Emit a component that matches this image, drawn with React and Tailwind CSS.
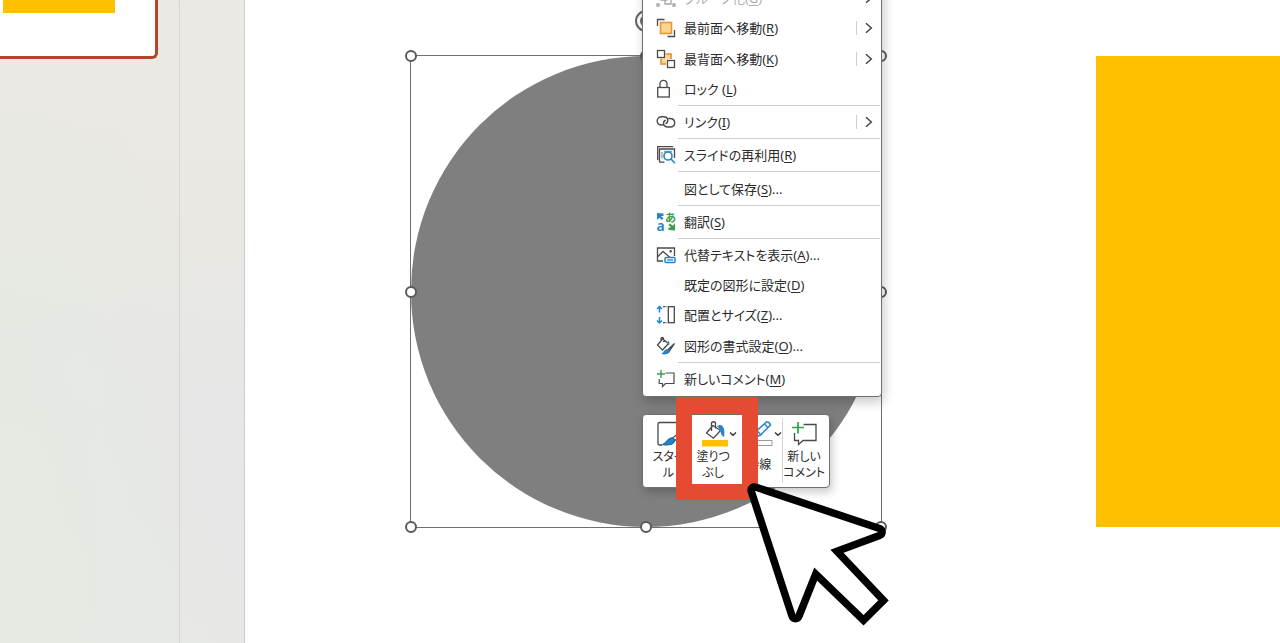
import React from "react";

const INK = "#4a4a4a";
const BLUE = "#2584c8";

function Icon({ children, size = "w-5 h-5" }) {
  return (
    <svg
      viewBox="0 0 20 20"
      className={`${size} shrink-0`}
      fill="none"
      stroke={INK}
      strokeWidth="1.3"
      aria-hidden="true"
    >
      {children}
    </svg>
  );
}

const GroupIcon = () => (
  <Icon>
    <g stroke="#a8a8a8">
      <path d="M5 6h6v6h-6zM9 9h6v7h-6z" />
      <path d="M1 1h2v2h-2zM17 1h2v2h-2zM1 16h2v2h-2zM17 16h2v2h-2z" />
    </g>
  </Icon>
);
const FrontIcon = () => (
  <Icon>
    <path d="M1.500 8V1.500h7M18.500 12v6.500h-7" />
    <rect x="4.500" y="4.500" width="11" height="11" fill="#fbd58b" stroke="#e8963a" strokeWidth="1.600" />
  </Icon>
);
const BackIcon = () => (
  <Icon>
    <rect x="5" y="5" width="10" height="10" fill="#fbd58b" stroke="#e8963a" strokeWidth="1.700" />
    <rect x="0" y="0" width="9.600" height="9.600" fill="#fff" stroke="none" />
    <rect x="10.200" y="10.200" width="9.600" height="9.600" fill="#fff" stroke="none" />
    <rect x="1.500" y="1.500" width="7" height="7" />
    <rect x="11.500" y="11.500" width="7" height="7" />
  </Icon>
);
const LockIcon = () => (
  <Icon>
    <rect x="1.700" y="8.500" width="11.600" height="9.500" />
    <path d="M4 8.500V4.800a3.500 3.500 0 0 1 7 0v3.700" />
  </Icon>
);
const LinkIcon = () => (
  <Icon>
    <path
      strokeWidth="1.400"
      d="M7.500 13H5.800C3 13 1.200 11.300 1.200 9s1.900-4.200 4.700-4.200h1.600c2.600 0 4.300 1.600 4.300 3.700 0 1.500-.9 2.700-2.300 3.100M12.300 6.500h1.400c3 0 5 1.700 5 4.200s-2 4.300-4.900 4.300h-1.700c-2.900 0-4.600-1.700-4.600-3.800 0-1.500 1-2.700 2.400-3.100"
    />
  </Icon>
);
const ReuseIcon = () => (
  <Icon>
    <path d="M1.700 15V1.700h15.500M3.500 17.200V4h15v9M3.500 17.200h5" />
    <path d="M6 7v6.500M8 6.500h8" stroke="#9b9b9b" />
    <circle cx="12" cy="11" r="4" stroke={BLUE} strokeWidth="1.600" fill="#fff" />
    <path d="M15 14l4 4.300" stroke={BLUE} strokeWidth="1.600" />
  </Icon>
);
const TranslateIcon = () => (
  <Icon>
    <path d="M1 1v7l2.300-2.200L6 8l1.500-1.500L5 4h2.500V1.500z" fill={BLUE} stroke="none" />
    <text x="0.500" y="18.500" fontSize="14" fontWeight="600" fontFamily="Noto Sans, sans-serif" fill={BLUE} stroke="none">a</text>
    <text x="9" y="10" fontSize="11" fontWeight="700" fontFamily="Noto Sans CJK JP, sans-serif" fill="#389f4b" stroke="none">あ</text>
    <path d="M19 18.500v-7l-2.300 2.200L14 11.500 12.500 13l2.500 2.500h-2.500V18z" fill="#389f4b" stroke="none" />
  </Icon>
);
const AltTextIcon = () => (
  <Icon>
    <path d="M7 16H1.500V3h17v8" strokeWidth="1.300" />
    <path d="M2 11.500l5-5 7 6" />
    <circle cx="14.700" cy="6.300" r="1.200" fill={INK} stroke="none" />
    <rect x="9" y="12.500" width="10" height="5" rx="1" fill="#fff" stroke={BLUE} strokeWidth="1.500" />
    <path d="M11 15h6" stroke={BLUE} />
  </Icon>
);
const SizeIcon = () => (
  <Icon>
    <path d="M3.500 1.500v6M1 4l2.500-2.500L6 4M3.500 12v6M1 15.500L3.500 18 6 15.500" stroke={BLUE} strokeWidth="1.500" />
    <path d="M7 1.700h4M7 17.700h4" strokeDasharray="2.500 1" />
    <rect x="12.300" y="1.700" width="6" height="16" />
  </Icon>
);
const FormatIcon = () => (
  <Icon>
    <path d="M6.500 3L1.500 9l5 5 6-6.500zM5 6V2.500c0-1.500 2.500-1.500 2.500 0V6" />
    <path d="M12 4.500c1.600.8 1.500 3 1 5l-1.500-1z" fill={BLUE} stroke="none" />
    <path d="M18.500 7.500l-7 6.500 1.500 1.700z" fill="#8a8a8a" />
    <path d="M11.500 13c1.500.5 2.500 1.500 2 3-1 2.500-4.500 2.800-8.500 2 2.500-.8 2.500-4.500 6.500-5z" fill={BLUE} stroke="none" />
  </Icon>
);
const CommentIcon = () => (
  <Icon>
    <path d="M9.500 4h8.500v10.500h-8.500l-3 3v-3H3.200V10" strokeWidth="1.200" />
    <path d="M5 1v8M1 5h8" stroke="#35a04a" strokeWidth="1.400" />
  </Icon>
);

const Chevron = () => (
  <svg viewBox="0 0 8 12" className="h-3 w-2 shrink-0" fill="none" stroke="#444" strokeWidth="1.500" aria-hidden="true">
    <path d="M1 1.200L6.300 6 1 10.800" />
  </svg>
);
const Caret = () => (
  <svg viewBox="0 0 8 6" className="h-1.5 w-2 shrink-0" fill="none" stroke="#333" strokeWidth="1.400" aria-hidden="true">
    <path d="M1 1.500l3 2.700 3-2.700" />
  </svg>
);

const MENU = [
  { label: "グループ化", k: "G", icon: GroupIcon, sub: true, disabled: true },
  { label: "最前面へ移動", k: "R", icon: FrontIcon, sub: true, split: true },
  { label: "最背面へ移動", k: "K", icon: BackIcon, sub: true, split: true },
  { label: "ロック ", k: "L", icon: LockIcon },
  null,
  { label: "リンク", k: "I", icon: LinkIcon, sub: true, split: true },
  null,
  { label: "スライドの再利用", k: "R", icon: ReuseIcon },
  null,
  { label: "図として保存", k: "S", more: true },
  null,
  { label: "翻訳", k: "S", icon: TranslateIcon },
  null,
  { label: "代替テキストを表示", k: "A", icon: AltTextIcon, more: true },
  { label: "既定の図形に設定", k: "D" },
  { label: "配置とサイズ", k: "Z", icon: SizeIcon, more: true },
  { label: "図形の書式設定", k: "O", icon: FormatIcon, more: true },
  null,
  { label: "新しいコメント", k: "M", icon: CommentIcon },
];

function MenuItem({ item }) {
  const Glyph = item.icon;
  return (
    <button
      type="button"
      role="menuitem"
      disabled={item.disabled}
      className={`flex w-full flex-1 items-center pl-[13px] pr-2 text-left text-[13px] leading-5 ${item.disabled ? "text-[#b0b0b0]" : "text-[#2b2b2b]"}`}
    >
      <span className="mr-2 flex w-5 shrink-0">{Glyph && <Glyph />}</span>
      <span className="flex-1 whitespace-pre">
        {item.label}
        (<u className="underline-offset-2">{item.k}</u>){item.more && "..."}
      </span>
      {item.split && <span className="mr-2 h-3.5 w-px bg-[#cfcfcf]" />}
      {item.sub && <Chevron />}
    </button>
  );
}

function ContextMenu() {
  return (
    <div
      role="menu"
      className="absolute -top-[18px] left-[397px] flex h-[415px] w-60 flex-col rounded border border-[#707070] bg-white pb-0.5 shadow-[2px_5px_12px_rgba(0,0,0,0.22)]"
    >
      {MENU.map((item, i) =>
        item ? (
          <MenuItem key={i} item={item} />
        ) : (
          <div key={i} role="separator" className="my-px ml-[35px] mr-px h-px shrink-0 bg-[#cdcdcd]" />
        )
      )}
    </div>
  );
}

function MiniToolbar() {
  const cell = "flex flex-col items-center gap-0.5 text-xs leading-4 text-[#2b2b2b] whitespace-nowrap";
  return (
    <div
      role="toolbar"
      className="absolute left-[397px] top-[414px] flex h-[74px] w-[188px] rounded border border-[#707070] bg-white pt-[5px] shadow-[2px_4px_10px_rgba(0,0,0,0.22)]"
    >
      <button type="button" className={`${cell} w-[52px]`}>
        <svg viewBox="0 0 26 26" className="h-[27px] w-[26px]" fill="none" stroke={INK} strokeWidth="1.300" aria-hidden="true">
          <path d="M6 24.500H3.500Q2 24.500 2 23V3.500Q2 2 3.500 2H24v8" />
          <path d="M26 10l-10 8 2 2.500 8-6" />
          <path d="M15.500 17.500c2.500 0 4 2 2.500 4-1.600 2.500-5 3.500-11 2.500 3.500-1.500 4-5.500 8.500-6.500z" fill={BLUE} stroke="#2669a0" />
        </svg>
        <span>スタイ<br />ル</span>
      </button>
      <button type="button" className={`${cell} w-[38px]`}>
        <span className="flex h-[27px] items-center gap-px pl-3">
          <svg viewBox="0 0 26 27" className="h-[27px] w-[26px] shrink-0" fill="none" stroke={INK} strokeWidth="1.300" aria-hidden="true">
            <path d="M11 5.500L4.500 13l7 5.200 7-7.700-7.500-5" />
            <path d="M9.500 11V2.500q2-1.500 4 0v6" />
            <path d="M15.500 6.500c5-2.500 7 2 6 9.500-2-1-2-4.500-3-6" fill={BLUE} stroke={BLUE} />
            <path d="M0 20h26v6.500H0z" fill="#ffc000" stroke="none" />
          </svg>
          <Caret />
        </span>
        <span>塗りつ<br />ぶし</span>
      </button>
      <button type="button" className={`${cell} w-[51px]`}>
        <span className="flex h-[27px] items-center gap-px pl-3.5">
          <svg viewBox="0 0 26 27" className="h-[27px] w-[26px] shrink-0" fill="none" aria-hidden="true">
            <path d="M8 17l2-6.500L19.500 2q3-.5 4 3L13.500 15z" stroke={BLUE} strokeWidth="1.500" />
            <path d="M17.500 4l3.500 3.500M10 10.500l3.500 4" stroke={BLUE} strokeWidth="1.300" />
            <path d="M1 20.500h24v5H1z" fill="#fff" stroke="#999" />
          </svg>
          <Caret />
        </span>
        <span className="pl-1 pt-2">枠線</span>
      </button>
      <span className="-mt-0.5 mb-1 w-px shrink-0 bg-[#d5d5d5]" />
      <button type="button" className={`${cell} flex-1 pr-1`}>
        <svg viewBox="0 0 26 27" className="h-[27px] w-[26px]" fill="none" stroke={INK} strokeWidth="1.300" aria-hidden="true">
          <path d="M12.500 4.500H25v16H12l-4.500 4v-4H3.500V13" />
          <path d="M7 2v11.500M1 7.500h12" stroke="#2fa34d" strokeWidth="1.700" />
        </svg>
        <span>新しい<br />コメント</span>
      </button>
    </div>
  );
}

function Handle({ place }) {
  return <span className={`absolute h-3 w-3 -translate-x-1/2 -translate-y-1/2 rounded-full border-2 border-[#595959] bg-white ${place}`} />;
}

function SelectedCircle() {
  return (
    <div className="absolute left-[165px] top-[55px] h-[473px] w-[472px] border border-[#707070]">
      <div className="h-full w-full rounded-full bg-[#7f7f7f]" />
      <span className="absolute -top-[46px] left-1/2 flex h-[22px] w-[22px] -translate-x-1/2 items-center justify-center rounded-full border-2 border-[#666] bg-white">
        <span className="h-3 w-3 rounded-full border-2 border-[#666]" />
      </span>
      <Handle place="left-0 top-0" />
      <Handle place="left-1/2 top-0" />
      <Handle place="left-full top-0" />
      <Handle place="left-0 top-1/2" />
      <Handle place="left-full top-1/2" />
      <Handle place="left-0 top-full" />
      <Handle place="left-1/2 top-full" />
      <Handle place="left-full top-full" />
    </div>
  );
}

export default function App() {
  return (
    <div className="flex h-screen overflow-hidden bg-white font-['Noto_Sans','Noto_Sans_CJK_JP',sans-serif] [font-feature-settings:'palt']">
      <aside className="flex w-[245px] shrink-0 border-r border-[#cccccc] bg-[radial-gradient(ellipse_at_0%_85%,#e4eae1_0%,transparent_65%),linear-gradient(to_bottom,#ebe9e3_0%,#e9e8e3_35%,#e6e6e6_65%,#e7e8e6_100%)]">
        <div className="w-[180px] border-r border-[#d6d6d3]">
          <div className="h-[59px] w-[158px] rounded-br-md border-b-[3px] border-r-[3px] border-[#b5432d] bg-white pl-[3px]">
            <div className="h-[13px] w-28 bg-[#ffc000]" />
          </div>
        </div>
      </aside>
      <main className="relative min-w-0 flex-1 overflow-hidden bg-white">
        <SelectedCircle />
        <div className="absolute left-[851px] right-0 top-14 h-[471px] bg-[#ffc000]" />
        <ContextMenu />
        <MiniToolbar />
        <div className="pointer-events-none absolute left-[431px] top-[397px] h-[103px] w-[82px] border-[16px] border-t-[17px] border-[#e54b32]" />
        <svg
          viewBox="745 480 150 150"
          className="pointer-events-none absolute left-[500px] top-[480px] h-[150px] w-[150px]"
          fill="#fff"
          stroke="#000"
          strokeWidth="7.500"
          aria-hidden="true"
        >
          <path d="M751.500 492C750 488 753 486.300 757 487.500L879.500 528.500C883 530 883 534 879.500 535.500L837 551.200L883.500 600.500L863.500 620.300L815.700 574L799 616C797.500 619.500 793.500 619.500 792 616Z" />
        </svg>
      </main>
    </div>
  );
}
